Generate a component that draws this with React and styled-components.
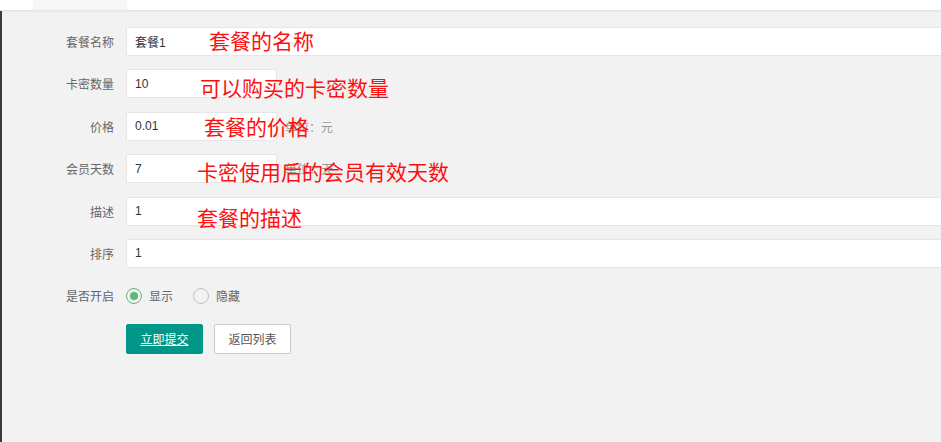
import React from "react";
import styled, { createGlobalStyle } from "styled-components";

const GlobalStyle = createGlobalStyle`
  html, body {
    margin: 0;
    padding: 0;
    background: #f2f2f2;
    overflow: hidden;
  }
  body {
    font-family: "Liberation Sans", "Noto Sans CJK SC", sans-serif;
  }
`;

const Page = styled.div`
  position: relative;
  width: 941px;
  height: 442px;
  overflow: hidden;
`;

const Header = styled.div`
  height: 10px;
  background: #fff;
  border-bottom: 1px solid #e4e4e4;
  box-shadow: 0 1px 2px rgba(0, 0, 0, 0.04);
  display: flex;
`;

const Tab = styled.div`
  margin-left: 33px;
  width: 94px;
  background: #f6f6f6;
`;

const Body = styled.div`
  border-left: 2px solid #3a3a3a;
  height: 431px;
  padding-top: 16px;
  box-sizing: border-box;
`;

const FormItem = styled.div`
  display: flex;
  align-items: center;
  height: 29px;
  margin-bottom: 13.4px;
`;

const Label = styled.label`
  width: 112px;
  margin-right: 12px;
  text-align: right;
  font-size: 12px;
  color: #666;
  flex-shrink: 0;
`;

const Input = styled.div`
  box-sizing: border-box;
  height: 29px;
  width: ${(p) => (p.$short ? "151px" : "900px")};
  flex-shrink: 0;
  background: #fff;
  border: 1px solid #e6e6e6;
  padding-left: 8px;
  display: flex;
  align-items: center;
  font-size: 12px;
  color: #333;
`;

const Hint = styled.span`
  margin-left: 8px;
  font-size: 12px;
  color: #999;
`;

const RadioGroup = styled.div`
  display: flex;
  align-items: center;
  gap: 20px;
`;

const Radio = styled.div`
  display: flex;
  align-items: center;
  gap: 7px;
  font-size: 12px;
  color: #666;
`;

const RadioIcon = styled.span`
  box-sizing: border-box;
  width: 16px;
  height: 16px;
  border-radius: 50%;
  border: 1px solid ${(p) => (p.$on ? "#5fb878" : "#c2c2c2")};
  display: flex;
  align-items: center;
  justify-content: center;
  &::after {
    content: "";
    display: ${(p) => (p.$on ? "block" : "none")};
    width: 8px;
    height: 8px;
    border-radius: 50%;
    background: #5fb878;
  }
`;

const Actions = styled.div`
  display: flex;
  gap: 11px;
  padding-left: 124px;
`;

const Button = styled.button`
  box-sizing: border-box;
  height: 30px;
  width: 77px;
  padding: 0;
  border-radius: 2px;
  font-family: inherit;
  font-size: 12px;
  cursor: pointer;
  background: ${(p) => (p.$primary ? "#009688" : "#fff")};
  color: ${(p) => (p.$primary ? "#fff" : "#555")};
  border: 1px solid ${(p) => (p.$primary ? "#009688" : "#c9c9c9")};
  text-decoration: ${(p) => (p.$primary ? "underline" : "none")};
`;

const Note = styled.div`
  position: absolute;
  left: ${(p) => p.$x}px;
  top: ${(p) => p.$y}px;
  font-family: "Noto Sans CJK SC", sans-serif;
  font-size: 21px;
  line-height: 21px;
  color: #ff1010;
  white-space: nowrap;
`;

const fields = [
  { label: "套餐名称", value: "套餐1" },
  { label: "卡密数量", value: "10", short: true },
  { label: "价格", value: "0.01", short: true, hint: "单位：元" },
  { label: "会员天数", value: "7", short: true, hint: "单位：天" },
  { label: "描述", value: "1" },
  { label: "排序", value: "1" },
];

const notes = [
  { text: "套餐的名称", x: 209, y: 30 },
  { text: "可以购买的卡密数量", x: 200, y: 77 },
  { text: "套餐的价格", x: 204, y: 116 },
  { text: "卡密使用后的会员有效天数", x: 197, y: 161 },
  { text: "套餐的描述", x: 197, y: 207 },
];

export default function App() {
  return (
    <Page>
      <GlobalStyle />
      <Header>
        <Tab />
      </Header>
      <Body>
        {fields.map((f) => (
          <FormItem key={f.label}>
            <Label>{f.label}</Label>
            <Input $short={f.short}>{f.value}</Input>
            {f.hint && <Hint>{f.hint}</Hint>}
          </FormItem>
        ))}
        <FormItem>
          <Label>是否开启</Label>
          <RadioGroup>
            <Radio>
              <RadioIcon $on />
              显示
            </Radio>
            <Radio>
              <RadioIcon />
              隐藏
            </Radio>
          </RadioGroup>
        </FormItem>
        <Actions>
          <Button $primary>立即提交</Button>
          <Button>返回列表</Button>
        </Actions>
      </Body>
      {notes.map((n) => (
        <Note key={n.text} $x={n.x} $y={n.y}>
          {n.text}
        </Note>
      ))}
    </Page>
  );
}
